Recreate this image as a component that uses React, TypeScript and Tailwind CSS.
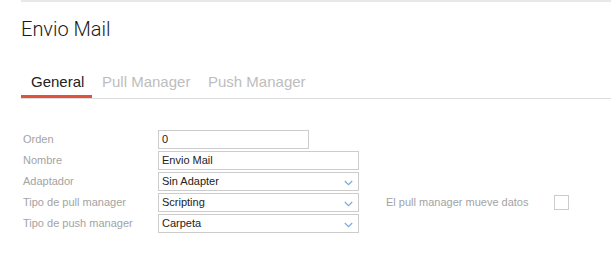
import { ReactNode } from "react";

function Chevron() {
  return (
    <svg width="9" height="6" viewBox="0 0 9 6" className="absolute right-[5px] top-[7px]">
      <path d="M0.8 1 L4.5 4.6 L8.2 1" fill="none" stroke="#7fa9db" strokeWidth="1.2" />
    </svg>
  );
}

function Field({ value, width, select }: { value: string; width: string; select?: boolean }) {
  return (
    <div className={`relative h-[19px] ${width} border border-[#cccccc] bg-white pl-[3px] flex items-center text-[11px] text-[#222222]`}>
      <span>{value}</span>
      {select && <Chevron />}
    </div>
  );
}

function Row({ label, children }: { label: string; children: ReactNode }) {
  return (
    <div className="flex items-center h-[19px]">
      <div className="w-[135px] text-[11px] text-[#a3a3a3]">{label}</div>
      {children}
    </div>
  );
}

export default function App() {
  const tabs = [
    { label: "General", width: "w-[71px]" },
    { label: "Pull Manager", width: "w-[106px]" },
    { label: "Push Manager", width: "w-[110px]" },
  ];

  return (
    <div className="w-[611px] h-[259px] bg-white pl-[21px] font-['Liberation_Sans',Arial,sans-serif]">
      <div className="h-[2px] bg-[#e8e8e8]" />

      {/* Header */}
      <h1 className="mt-[13px] h-[28px] leading-[28px] text-[20px] font-light text-[#1a1a1a] font-['Roboto',sans-serif]">
        Envio Mail
      </h1>

      {/* Tabs */}
      <div className="mt-[29px] flex border-b border-[#dddddd]">
        {tabs.map((tab, i) => (
          <div
            key={tab.label}
            className={`${tab.width} pl-[10px] pb-[3px] border-b-[3px] text-[15px] leading-[20px] whitespace-nowrap ${
              i === 0 ? "border-[#e0533b] text-[#222222]" : "border-transparent text-[#bdbdbd]"
            }`}
          >
            {tab.label}
          </div>
        ))}
      </div>

      {/* Form */}
      <div className="mt-[31px] pl-[2px] flex flex-col gap-[2px]">
        <Row label="Orden">
          <Field value="0" width="w-[151px]" />
        </Row>
        <Row label="Nombre">
          <Field value="Envio Mail" width="w-[201px]" />
        </Row>
        <Row label="Adaptador">
          <Field value="Sin Adapter" width="w-[201px]" select />
        </Row>
        <Row label="Tipo de pull manager">
          <Field value="Scripting" width="w-[201px]" select />
          <div className="ml-[27px] w-[168px] text-[11px] text-[#a3a3a3]">El pull manager mueve datos</div>
          <div className="w-[15px] h-[15px] border border-[#cccccc] bg-white" />
        </Row>
        <Row label="Tipo de push manager">
          <Field value="Carpeta" width="w-[201px]" select />
        </Row>
      </div>
    </div>
  );
}
